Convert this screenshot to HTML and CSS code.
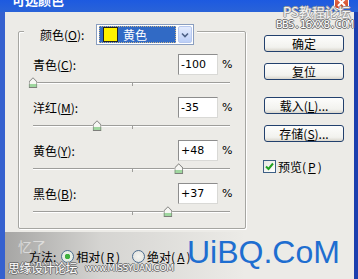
FILE: index.html
```html
<!DOCTYPE html>
<html lang="zh">
<head>
  <meta charset="UTF-8" />
  <title>可选颜色</title>
  <link rel="stylesheet" href="styles.css">
</head>
<body>

  <div class="window">
    <div class="titlebar">
      <span class="title">可选颜色</span>
      <span class="close">
        <svg width="9" height="9" viewBox="0 0 9 9"><path d="M1 1L8 8M8 1L1 8" stroke="#fff" stroke-width="2"/></svg>
      </span>
    </div>

    <div class="client">
      <div class="left">
        <div class="group">
          <div class="group-head">
            <span class="head-label">颜色(<u>O</u>):</span>
            <div class="combo">
              <div class="combo-value"><span class="swatch"></span>黄色</div>
              <div class="combo-arrow">
                <svg width="8" height="6" viewBox="0 0 8 6"><path d="M1 1.5L4 4.5L7 1.5" fill="none" stroke="#4d6185" stroke-width="1.6"/></svg>
              </div>
            </div>
          </div>

          <div class="channel">
            <div class="channel-line">
              <span class="channel-name">青色(<u>C</u>):</span>
              <span class="field">-100</span>
              <span class="unit">%</span>
            </div>
            <div class="slider"><span class="thumb" style="left: 0%"></span></div>
          </div>

          <div class="channel">
            <div class="channel-line">
              <span class="channel-name">洋红(<u>M</u>):</span>
              <span class="field">-35</span>
              <span class="unit">%</span>
            </div>
            <div class="slider"><span class="thumb" style="left: 32.5%"></span></div>
          </div>

          <div class="channel">
            <div class="channel-line">
              <span class="channel-name">黄色(<u>Y</u>):</span>
              <span class="field">+48</span>
              <span class="unit">%</span>
            </div>
            <div class="slider"><span class="thumb" style="left: 74%"></span></div>
          </div>

          <div class="channel">
            <div class="channel-line">
              <span class="channel-name">黑色(<u>B</u>):</span>
              <span class="field">+37</span>
              <span class="unit">%</span>
            </div>
            <div class="slider"><span class="thumb" style="left: 68.5%"></span></div>
          </div>
        </div>

        <div class="method">
          <span>方法:</span>
          <label class="radio"><span class="dot on"></span>相对(<u>R</u>)</label>
          <label class="radio"><span class="dot"></span>绝对(<u>A</u>)</label>
        </div>
      </div>

      <div class="buttons">
        <button class="btn">确定</button>
        <button class="btn">复位</button>
        <button class="btn btn-gap">载入(<u>L</u>)...</button>
        <button class="btn">存储(<u>S</u>)...</button>
        <label class="check">
          <span class="box">
            <svg width="9" height="9" viewBox="0 0 9 9"><path d="M1 4.5L3.5 7L8 1.5" fill="none" stroke="#21a121" stroke-width="2"/></svg>
          </span>
          预览(<u>P</u>)
        </label>
      </div>
    </div>

    <div class="smudge"></div>
    <div class="mark mark-ps">PS教程论坛</div>
    <div class="mark mark-bbs">BBS.16XX8.COM</div>
    <div class="mark mark-yi">忆了</div>
    <div class="mark mark-sy">思缘设计论坛</div>
    <div class="mark mark-www">www.MISSYUAN.COM</div>
    <div class="mark mark-uibq">UiBQ.CoM</div>
  </div>

</body>
</html>
```

FILE: styles.css
```css
    body {
      margin: 0;
      font-family: "Noto Sans CJK SC", sans-serif;
      font-size: 12px;
      color: #000;
      background: #fff;
    }

    .window {
      position: relative;
      width: 358px;
      height: 279px;
      overflow: hidden;
      background: #ecebe7;
    }

    .titlebar {
      height: 12px;
      background: linear-gradient(#1d5ae0, #2a63d8);
      overflow: hidden;
      display: flex;
      align-items: flex-start;
      padding-left: 12px;
    }

    .title {
      margin-top: -7px;
      line-height: 14px;
      font-size: 13px;
      font-weight: bold;
      color: #fff;
    }

    .close {
      position: absolute;
      top: -6px;
      right: 9px;
      width: 15px;
      height: 15px;
      border: 1px solid #fff;
      border-radius: 3px;
      background: linear-gradient(#e8795a, #cf4a26);
      display: flex;
      align-items: flex-end;
      justify-content: center;
      padding-bottom: 1px;
      box-sizing: border-box;
    }

    .client {
      position: relative;
      z-index: 1;
      display: flex;
      height: 267px;
      border-left: 5px solid #3561cf;
      border-right: 4px solid #1c3fae;
    }

    .left {
      padding: 19px 0 0 13px;
    }

    .group {
      width: 228px;
      height: 198px;
      box-sizing: border-box;
      border: 1px solid #a6a6a2;
      border-radius: 2px;
      box-shadow: 1px 1px 0 #fff, inset 1px 1px 0 #fff;
    }

    .group-head {
      display: flex;
      align-items: center;
      width: fit-content;
      height: 21px;
      margin: -8px 0 0 5px;
      padding-right: 3px;
      background: #ecebe7;
    }

    .head-label {
      width: 72px;
      box-sizing: border-box;
      padding-left: 16px;
    }

    .combo {
      display: flex;
      width: 98px;
      height: 21px;
      box-sizing: border-box;
      border: 1px solid #8a9ebf;
      background: #fff;
      padding: 1px 1px 1px 2px;
      gap: 2px;
    }

    .combo-value {
      flex: 1;
      display: flex;
      align-items: center;
      gap: 5px;
      background: #316ac5;
      outline: 1px dotted #c9b48a;
      outline-offset: -1px;
      color: #fff;
      padding-left: 4px;
    }

    .swatch {
      width: 13px;
      height: 13px;
      background: #fff200;
      border: 1px solid #222;
    }

    .combo-arrow {
      width: 12px;
      display: flex;
      align-items: center;
      justify-content: center;
      border: 1px solid #b7c8ef;
      border-radius: 2px;
      background: linear-gradient(#e3ebfd, #bccff7);
    }

    .channel {
      margin-top: 9px;
      padding: 0 10px 0 14px;
    }

    .channel-line {
      display: flex;
      align-items: center;
      height: 21px;
    }

    .channel-name {
      flex: 1;
    }

    .field {
      width: 40px;
      height: 21px;
      box-sizing: border-box;
      padding: 2px 0 0 2px;
      background: #fff;
      border: 1px solid;
      border-color: #8d8d8d #d9d9d6 #d9d9d6 #8d8d8d;
      font-family: "DejaVu Sans", sans-serif;
      font-size: 11px;
      line-height: 16px;
    }

    .unit {
      width: 13px;
      margin-left: 4px;
      font-family: "DejaVu Sans", sans-serif;
      font-size: 11px;
    }

    .slider {
      position: relative;
      height: 11px;
      margin: 2px 5px 0 0;
    }

    .slider::before {
      content: '';
      position: absolute;
      left: 0;
      right: 0;
      top: 5px;
      height: 1px;
      background: #9e9e9b;
      border-bottom: 1px solid #fff;
    }

    .slider::after {
      content: '';
      position: absolute;
      left: 50%;
      top: 5px;
      width: 1px;
      height: 4px;
      background: #9e9e9b;
    }

    .thumb {
      position: absolute;
      top: 0;
      z-index: 1;
      width: 9px;
      height: 11px;
      transform: translateX(-50%);
      background: linear-gradient(#f7f7f4 60%, #9fd79f 60%);
      clip-path: polygon(50% 0, 100% 40%, 100% 100%, 0 100%, 0 40%);
    }

    .thumb::before {
      content: '';
      position: absolute;
      inset: 0;
      background: #7e7e7b;
      clip-path: polygon(50% 0, 100% 40%, 100% 100%, 0 100%, 0 40%, 50% 0, 50% 12%, 12% 44%, 12% 91%, 88% 91%, 88% 44%, 50% 12%);
    }

    .method {
      display: flex;
      align-items: center;
      height: 14px;
      margin-top: 20px;
      padding-left: 11px;
    }

    .radio {
      display: flex;
      align-items: center;
      gap: 2px;
      margin-left: 5px;
    }

    .radio + .radio {
      margin-left: 12px;
    }

    .dot {
      width: 13px;
      height: 13px;
      box-sizing: border-box;
      border: 1px solid #4c6d8f;
      border-radius: 50%;
      background: radial-gradient(circle, #f4f4f0 0, #e0e0dc 100%);
    }

    .dot.on {
      background: radial-gradient(circle, #3fb03f 0, #3fb03f 2.5px, #e6eee6 3px);
    }

    .buttons {
      display: flex;
      flex-direction: column;
      width: 80px;
      margin-left: 18px;
      padding-top: 23px;
    }

    .btn {
      height: 17px;
      margin-bottom: 11px;
      padding: 0;
      border: 1px solid #22406d;
      border-radius: 3px;
      background: linear-gradient(#fdfdfc, #f2f2ee 75%, #d9d6cd);
      font-family: "Noto Sans CJK SC", sans-serif;
      font-size: 12px;
      line-height: 15px;
      color: #000;
    }

    .btn-gap {
      margin-top: 6px;
    }

    .check {
      display: flex;
      align-items: center;
      gap: 2px;
      margin: 5px 0 0 -1px;
    }

    .box {
      width: 13px;
      height: 13px;
      box-sizing: border-box;
      border: 1px solid #3d5f85;
      background: linear-gradient(135deg, #e8e8e2, #fff);
      display: flex;
      align-items: center;
      justify-content: center;
    }

    .smudge {
      position: absolute;
      left: 5px;
      top: 232px;
      width: 240px;
      height: 47px;
      background: linear-gradient(90deg, rgba(120,120,120,0.6), rgba(160,160,160,0.3) 40%, rgba(200,200,200,0));
    }

    .mark {
      position: absolute;
      z-index: 2;
      white-space: nowrap;
      color: #fff;
      text-shadow: 1px 0 #6e6e6e, -1px 0 #6e6e6e, 0 1px #6e6e6e, 0 -1px #6e6e6e;
    }

    .mark-ps {
      left: 283px;
      top: 4px;
      font-size: 13px;
      line-height: 16px;
      color: #f4f4f4;
      text-shadow: 1px 0 #9a9a9a, -1px 0 #9a9a9a, 0 1px #9a9a9a, 0 -1px #9a9a9a;
    }

    .mark-bbs {
      left: 276px;
      top: 19px;
      font-family: "DejaVu Sans Mono", monospace;
      font-size: 11px;
      line-height: 12px;
      letter-spacing: -0.7px;
    }

    .mark-yi {
      left: 18px;
      top: 236px;
      font-size: 14px;
      color: rgba(255,255,255,0.55);
      text-shadow: none;
    }

    .mark-sy {
      left: 8px;
      top: 260px;
      font-size: 12px;
      line-height: 16px;
      letter-spacing: -0.5px;
    }

    .mark-www {
      left: 85px;
      top: 262px;
      font-family: "DejaVu Sans", sans-serif;
      font-size: 9px;
      line-height: 12px;
      letter-spacing: -0.4px;
    }

    .mark-uibq {
      left: 187px;
      top: 234px;
      font-family: "Liberation Sans", sans-serif;
      font-size: 32px;
      line-height: 36px;
      color: #1e6ed0;
      text-shadow: none;
    }
```
